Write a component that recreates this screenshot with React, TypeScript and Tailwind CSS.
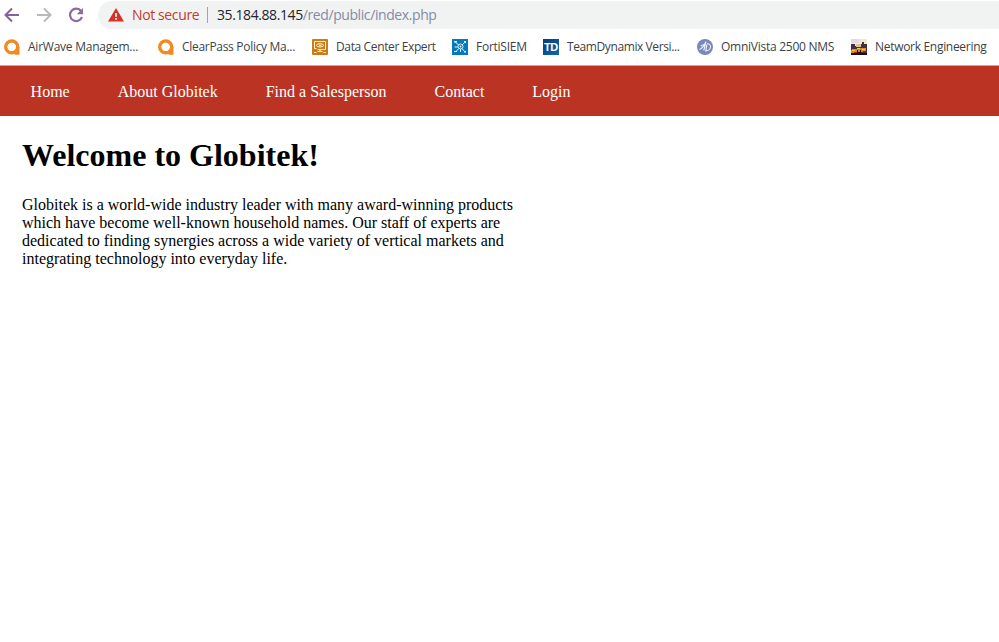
import type { ReactNode } from 'react';

function ArubaIcon() {
  return (
    <svg width="16" height="16" viewBox="0 0 16 16" className="shrink-0">
      <circle cx="7.7" cy="7.9" r="5.9" fill="none" stroke="#f18a21" strokeWidth="3.5" />
      <path d="M12 8h3.5v7.8H10.5z" fill="#f18a21" />
      <circle cx="7.7" cy="7.9" r="4.2" fill="white" />
    </svg>
  );
}

function DataCenterIcon() {
  return (
    <svg width="16" height="16" viewBox="0 0 16 16" className="shrink-0">
      <rect width="16" height="16" rx="1" fill="#cc7c13" />
      <g fill="none" stroke="#fff3df" strokeWidth="1">
        <path d="M4.5 9.5h-2v-7h11v8h-8M8 10.5v2M2 13.5h2.5M5.5 12.5h5M11.5 13.5H14" />
        <ellipse cx="8" cy="6.3" rx="3.4" ry="1.7" />
        <path d="M7 6.3h2.5" />
      </g>
    </svg>
  );
}

function FortiIcon() {
  return (
    <svg width="16" height="16" viewBox="0 0 16 16" className="shrink-0">
      <rect width="16" height="16" fill="#0878bd" />
      <g fill="none" stroke="#d9effa" strokeWidth="1">
        <circle cx="8.5" cy="7.5" r="2.5" />
        <path d="M3 3l3.8 3M13 3l-2.7 2.8M2.5 8H6M6.8 9.5L3.5 13M10 9.5l3 3.5M8.5 10v3" />
      </g>
      <g fill="#d9effa">
        <path d="M2 2h3v1.5H2zM12 2h2v2h-2zM2 12h3v1H2zM12 12h2v1.5h-2z" />
        <circle cx="8.5" cy="7.5" r="1" />
      </g>
    </svg>
  );
}

function TeamDynamixIcon() {
  return (
    <span className="flex h-4 w-4 shrink-0 items-center justify-center bg-linear-to-br from-[#0a3a7c] to-[#1268ad] font-['Liberation_Sans',sans-serif] text-[11px] leading-4 font-bold tracking-[-0.3px] text-white">
      TD
    </span>
  );
}

function OmniVistaIcon() {
  return (
    <svg width="16" height="16" viewBox="0 0 16 16" className="shrink-0">
      <circle cx="8" cy="8" r="8" fill="#7888bb" />
      <path
        d="M2.5 10.5C5 9.5 7.5 6 9 2.7L6.8 11.5M3.8 7.2c1.2-1.3 2.6-1.7 4-1.4M9.8 5.5L8.8 12c2.7 0 4.7-2 4.7-4.4 0-1.8-1.5-3-3.5-2.9"
        fill="none"
        stroke="#eff0fb"
        strokeWidth="1.1"
      />
    </svg>
  );
}

function NetworkIcon() {
  return (
    <svg width="16" height="16" viewBox="0 0 16 16" className="shrink-0" shapeRendering="crispEdges">
      <rect width="16" height="16" fill="#f5e8c8" />
      <path d="M0 0h8v4H0z" fill="#e2d8e6" />
      <path d="M0 5h4v2h5V5h2V3h2v2h3v9H0z" fill="#433044" />
      <path d="M5 5h5v3H5z" fill="#d9c3a0" />
      <path d="M1 10h5V9h9v4H8v1H0v-3h1z" fill="#dd8a18" />
      <path d="M6 9h3v1H6zM1 11h3v1H1zM11 10h3v1h-3z" fill="#ffc83b" />
      <path d="M0 14h6v-1h4v1h6v2H0zM6 11h1v2H6zM9 11h1v2H9z" fill="#1a1018" />
      <path d="M12 12h3v1h-3zM3 13h3v1H3z" fill="#a3261b" />
    </svg>
  );
}

function Bookmark({ icon, label, width, text }: { icon: ReactNode; label: string; width: string; text: string }) {
  return (
    <div className={`flex shrink-0 items-center gap-2 ${width}`}>
      {icon}
      <span className={`whitespace-nowrap ${text}`}>{label}</span>
    </div>
  );
}

export default function App() {
  return (
    <div className="h-[642px] w-[999px] overflow-hidden bg-white font-['Liberation_Serif',serif] text-black">
      <header className="h-[66px] border-b border-[#b0b0b3] font-['Open_Sans',sans-serif]">
        <div className="flex h-[30px] items-center">
          <div className="flex w-[98px] shrink-0 items-center gap-4 pl-1">
            <svg width="16" height="16" viewBox="0 0 16 16" fill="none" stroke="#80649f" strokeWidth="2">
              <path d="M15 8H2M8 1.5L1.5 8 8 14.5" />
            </svg>
            <svg width="16" height="16" viewBox="0 0 16 16" fill="none" stroke="#b9b9bd" strokeWidth="2">
              <path d="M1 8h13M8 1.5L14.5 8 8 14.5" />
            </svg>
            <svg width="16" height="16" viewBox="0 0 16 16" fill="none" stroke="#8d6a9f" strokeWidth="2.2">
              <path d="M13.2 4.2A6.2 6.2 0 1 0 14 10" />
              <path d="M15 1v6.2H8.8z" fill="#8d6a9f" stroke="none" />
            </svg>
          </div>
          <div className="flex h-7 min-w-0 flex-1 items-center rounded-l-full bg-[#f1f3f3] pl-[10px] text-[14px]">
            <svg width="16" height="14" viewBox="0 0 16 14" className="shrink-0">
              <path d="M8 0l8 13.5H0z" fill="#d93025" />
              <path d="M7.2 5h1.7v3.8H7.2zM7.2 10h1.7v1.7H7.2z" fill="white" />
            </svg>
            <span className="ml-2 w-[75px] shrink-0 pb-0.5 whitespace-nowrap tracking-[-0.38px] text-[#c5392c]">
              Not secure
            </span>
            <span className="h-4 w-px bg-[#a7a0b3]" />
            <span className="ml-[9px] pb-0.5 whitespace-nowrap tracking-[-0.41px] text-[#858aa3]">
              <span className="text-[#242428]">35.184.88.145</span>/red/public/index.php
            </span>
          </div>
        </div>
        <div className="flex h-[34px] items-center pl-1 text-[12px] text-[#3c3f45]">
          <Bookmark icon={<ArubaIcon />} label="AirWave Managem..." width="w-[154px]" text="tracking-[-0.24px]" />
          <Bookmark icon={<ArubaIcon />} label="ClearPass Policy Ma..." width="w-[154px]" text="tracking-[-0.3px]" />
          <Bookmark icon={<DataCenterIcon />} label="Data Center Expert" width="w-[140px]" text="tracking-[-0.37px]" />
          <Bookmark icon={<FortiIcon />} label="FortiSIEM" width="w-[91px]" text="tracking-[-0.25px]" />
          <Bookmark icon={<TeamDynamixIcon />} label="TeamDynamix Versi..." width="w-[154px]" text="tracking-[-0.4px]" />
          <Bookmark icon={<OmniVistaIcon />} label="OmniVista 2500 NMS" width="w-[154px]" text="tracking-[-0.26px]" />
          <Bookmark icon={<NetworkIcon />} label="Network Engineering" width="w-[148px]" text="tracking-[-0.3px]" />
        </div>
      </header>
      <nav className="flex h-[50px] items-center gap-12 bg-[#ba3323] pt-0.5 pl-[30.6px] text-[16px] text-white">
        <a>Home</a>
        <a>About Globitek</a>
        <a>Find a Salesperson</a>
        <a>Contact</a>
        <a>Login</a>
      </nav>
      <main className="pt-[21px] pl-[22px]">
        <h1 className="text-[32px] leading-[37px] font-bold">Welcome to Globitek!</h1>
        <p className="mt-[22px] w-[500px] text-[16px] leading-[18px]">
          Globitek is a world-wide industry leader with many award-winning products which have become well-known
          household names. Our staff of experts are dedicated to finding synergies across a wide variety of vertical
          markets and integrating technology into everyday life.
        </p>
      </main>
    </div>
  );
}
